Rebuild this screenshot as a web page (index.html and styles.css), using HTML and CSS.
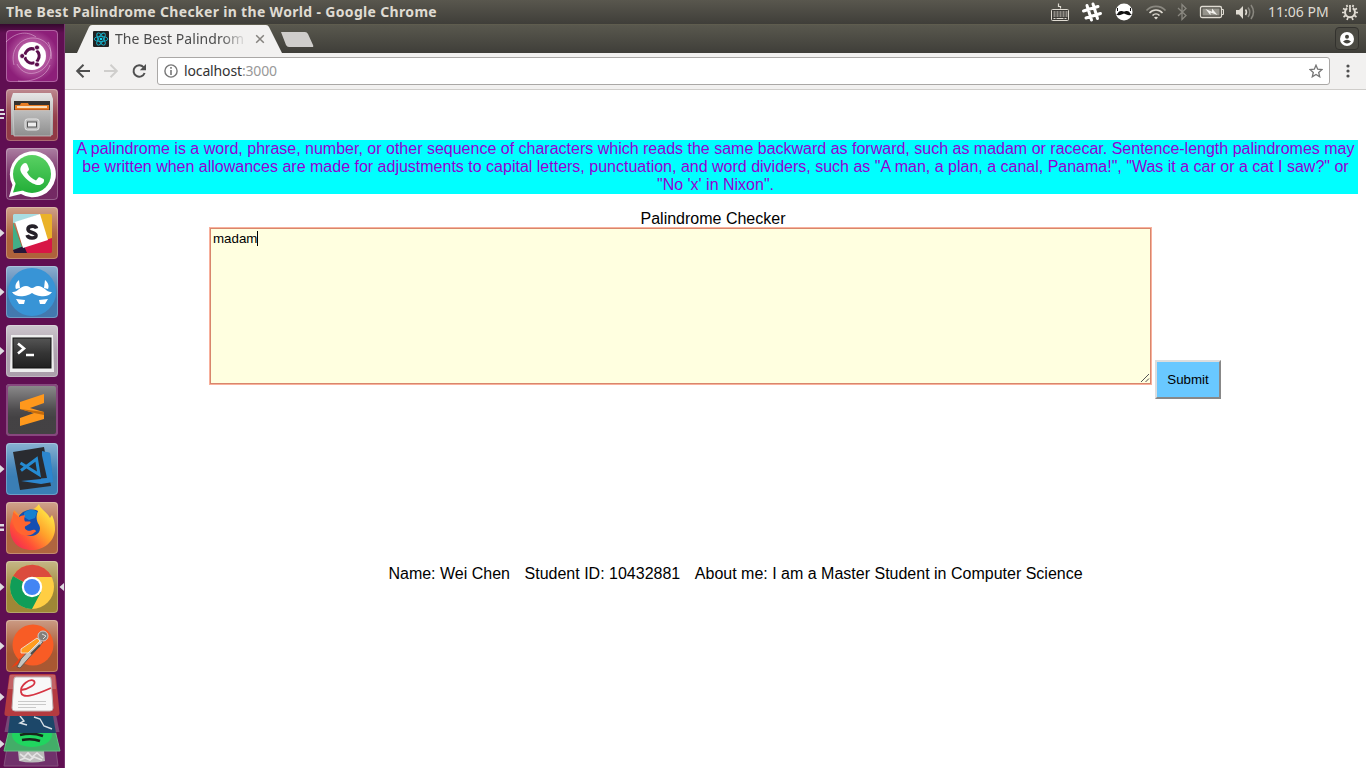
FILE: index.html
```html
<!DOCTYPE html>
<html lang="en">
<head>
<meta charset="utf-8">
<title>The Best Palindrome Checker in the World</title>
<link rel="stylesheet" href="styles.css">
</head>
<body>
<header class="panel">
  <span class="panel-title">The Best Palindrome Checker in the World - Google Chrome</span>
  <svg class="tray" width="212" height="24" viewBox="1048 0 212 24" fill="none">
    <!-- keyboard -->
    <path d="M1060.500 8.500V6.500h-2V3.500" stroke="#dfdbd2" stroke-width="1.200"/>
    <rect x="1051.500" y="9.500" width="17" height="11" rx="1" fill="#3c3b37" stroke="#dfdbd2"/>
    <path d="M1053.500 12h14M1053.500 14h14M1053.500 16h14" stroke="#dfdbd2" stroke-dasharray="2 1"/>
    <path d="M1053.500 18.500h2m1 0h7m1 0h2" stroke="#dfdbd2"/>
    <!-- hash -->
    <path d="M1087 5.500l4.500 14.500M1093 4l4.500 14.500M1083.500 11l14.500-4.500M1086 18l14.500-4.500" stroke="#fff" stroke-width="3" stroke-linecap="round"/>
    <!-- moustache -->
    <circle cx="1124" cy="12" r="8.500" fill="#fff"/>
    <path d="M1116 14.500c2 0 2-3.500 5-3.500 1.500 0 2 .5 3 .5s1.500-.5 3-.5c3 0 3 3.500 5 3.500-3 1.500-6 0-8-1-2 1-5 2.500-8 1z" fill="#111"/>
    <path d="M1117.500 8v3m13-3v3" stroke="#111"/>
    <!-- wifi -->
    <path d="M1146.500 10.500c5-5.500 14-5.500 19 0" stroke="#8a8880" stroke-width="1.600"/>
    <path d="M1149.500 13c3.500-4 9.500-4 13 0M1152.500 15.500c2-2 5-2 7 0" stroke="#dfdbd2" stroke-width="1.600"/>
    <path d="M1154 17.500q2-1.300 4 0l-2 2z" fill="#dfdbd2"/>
    <!-- bluetooth -->
    <path d="M1178 8l8 7.500-4 4V4.500l4 4-8 7.500" stroke="#8a8880" stroke-width="1.300"/>
    <!-- battery -->
    <rect x="1200.500" y="6.500" width="21" height="11" rx="1.500" stroke="#dfdbd2" stroke-width="1.300"/>
    <rect x="1202.500" y="8.500" width="17" height="7" fill="#96948c"/>
    <path d="M1222 9.500h1.500v5h-1.500" stroke="#dfdbd2"/>
    <path d="M1205.500 9l6.500 2.700V8.500l5.500 6.500-7-2.500v2.700z" fill="#f2f1ed"/>
    <!-- volume -->
    <path d="M1236 10h3l4-4v13l-4-4.500h-3z" fill="#dfdbd2"/>
    <path d="M1245.500 9.500q2 2.700 0 5.500" stroke="#dfdbd2" stroke-width="1.500"/>
    <path d="M1248 7.500q3.600 4.700 0 9.500M1251 5q5 7 0 14" stroke="#8a8880" stroke-width="1.500"/>
  </svg>
  <span class="clock">11:06 PM</span>
  <svg class="gear" width="18" height="18" viewBox="0 0 18 18" fill="none" stroke="#dfdbd2">
    <path d="M6.200 5.200a5 5 0 1 0 5.600 0" stroke-width="2"/>
    <path d="M9 2v7" stroke-width="1.800"/>
    <path d="M5.500 2l1 2M12.500 2l-1 2M2 5.500l2 1M16 5.500l-2 1M1 9.500h2.500M17 9.500h-2.500M2.500 14l2-1.500M15.500 14l-2-1.500M6 17l1-2.500M12 17l-1-2.500" stroke-width="1.700"/>
  </svg>
</header>
<div class="desktop">
  <nav class="launcher">
    <svg width="64" height="744" viewBox="0 24 64 744">
      <defs>
        <linearGradient id="gloss" x2="0" y2="1"><stop stop-color="#fff" stop-opacity=".42"/><stop offset=".5" stop-color="#fff" stop-opacity=".08"/><stop offset=".65" stop-color="#fff" stop-opacity=".03"/></linearGradient>
        <radialGradient id="dash"><stop stop-color="#d79bcb"/><stop offset=".6" stop-color="#b0529c"/><stop offset="1" stop-color="#8d1f79"/></radialGradient>
        <linearGradient id="silver" x2="0" y2="1"><stop stop-color="#e6e6e6"/><stop offset="1" stop-color="#999"/></linearGradient>
        <linearGradient id="drawer" x2="0" y2="1"><stop stop-color="#bdbdbd"/><stop offset="1" stop-color="#8e8e8e"/></linearGradient>
        <linearGradient id="green" x2="0" y2="1"><stop stop-color="#59d163"/><stop offset="1" stop-color="#23ae38"/></linearGradient>
        <linearGradient id="screen" x2="0" y2="1"><stop stop-color="#555"/><stop offset=".5" stop-color="#353535"/><stop offset="1" stop-color="#202020"/></linearGradient>
        <linearGradient id="fire" x1="1" y1="0" x2="0" y2="1"><stop offset=".1" stop-color="#fff24a"/><stop offset=".45" stop-color="#ffa12b"/><stop offset=".72" stop-color="#ff4f37"/><stop offset="1" stop-color="#ee1763"/></linearGradient>
        <g id="frame"><rect width="52" height="52" rx="3.500" fill="url(#gloss)"/><rect x=".5" y=".5" width="51" height="51" rx="3.500" fill="none" stroke="#fff" stroke-opacity=".25"/></g>
        <path id="pip" d="M0-4l4.500 4L0 4z" fill="#dedbe0"/>
      </defs>

      <!-- dash -->
      <g transform="translate(6 30)">
        <rect width="52" height="52" rx="4" fill="url(#dash)"/>
        <g fill="none" stroke="#e9c4e2" stroke-opacity=".5"><path d="M8 35C4 20 14 8 27 8c12 0 20 10 18 21M42 12c7 12 0 28-13 31-9 2-15-3-18-9M12 51c9 1 27-1 32-16M0 12C9 3 20 0 30 7"/></g>
        <circle cx="26" cy="26" r="14" fill="#fff"/>
        <circle cx="26" cy="26" r="7.200" fill="none" stroke="#5c0f4e" stroke-width="3" stroke-dasharray="13 2.080" transform="rotate(-52 26 26)"/>
        <g fill="#5c0f4e" stroke="#fff" stroke-width=".8"><circle cx="16.200" cy="26" r="2.500"/><circle cx="31" cy="17.500" r="2.500"/><circle cx="31" cy="34.500" r="2.500"/></g>
        <rect x=".5" y=".5" width="51" height="51" rx="3.500" fill="none" stroke="#fff" stroke-opacity=".3"/>
      </g>
      <!-- files -->
      <g transform="translate(6 89)">
        <rect width="52" height="52" rx="4" fill="#8e3440"/><use href="#frame"/>
        <path d="M7 4h38l2 6v36H5V10z" fill="url(#silver)"/>
        <path d="M8 12h36v12H8z" fill="#35312f"/><path d="M9 16h5l1-2h7l1 2h20v8H9z" fill="#e77d24"/><path d="M11 17h30v2H11z" fill="#f8ddbd"/><path d="M9 20h34v3H9z" fill="#c45a17"/>
        <path d="M7 21.500h38V47H8z" fill="url(#drawer)" stroke="#d0d0d0" stroke-width=".7"/>
        <rect x="19" y="30" width="14" height="11" rx="2.500" fill="#bbb" stroke="#e6e6e6"/><rect x="21.500" y="33" width="9" height="5" fill="#eee" stroke="#555"/>
      </g>
      <!-- chat -->
      <g transform="translate(6 148)">
        <rect width="52" height="52" rx="4" fill="#70235f"/><use href="#frame"/>
        <path d="M3 49l3.500-12A23 23 0 1 1 15 46z" fill="#fff"/>
        <circle cx="26" cy="26" r="19" fill="url(#green)"/><path d="M7 44.500l3-10 7 8z" fill="#26b43b"/>
        <path d="M17 16c2-2 4-1 4.500 1l1.500 4c.4 1-1.500 2.500-2 3.300 2 4 5 6.500 9 8.200l2.500-3c1-.7 5 1.500 5.500 2 .6 3-2 5-4.500 5.500-3 .5-9-2-13-6s-7-8-6-11c.4-2 1.500-3 2.500-4z" fill="#fff"/>
      </g>
      <!-- team messenger -->
      <g transform="translate(6 207)">
        <rect width="52" height="52" rx="4" fill="#ac5d35"/><use href="#frame"/>
        <path d="M8 7h26l-25 9H7V8z" fill="#a9dde2"/><path d="M33 7h12l1 1v24l-7 3z" fill="#eab229"/><path d="M7 15l9 25-9 3z" fill="#42ae87"/><path d="M19 46l-3-6 30-9v14l-1 1z" fill="#d71646"/><path d="M7 43l11-4 3 7H8z" fill="#261738"/><path d="M9 15l25-8 8 26-25 8z" fill="#fff"/>
        <path d="M30.500 21.500c-1-3.500-8.500-3-8.500.7 0 4 8.500 2.500 8 6.500-.5 3.200-8 3-8.800-.7" fill="none" stroke="#252028" stroke-width="3.600"/>
      </g>
      <!-- moustache -->
      <g transform="translate(6 266)">
        <rect width="52" height="52" rx="4" fill="#3d75ad"/><use href="#frame"/><circle cx="26" cy="26" r="24" fill="#3894d6"/>
        <path d="M6 26c5 1 8-6 14-6 3 0 4 2 6 2s3-2 6-2c6 0 9 7 14 6-4 7-16 4-20 1-4 3-16 6-20-1zM13 14c-4 3-4 7-3 9l4-1zM39 14c4 3 4 7 3 9l-4-1zM10 33l9 1-1 4h-5zM42 33l-9 1 1 4h5z" fill="#fff"/>
      </g>
      <!-- terminal -->
      <g transform="translate(6 325)">
        <rect width="52" height="52" rx="4" fill="#a99da9"/><use href="#frame"/>
        <path d="M5 10h42l1 37H4z" fill="#eee"/><rect x="7" y="13" width="38" height="30" fill="url(#screen)" stroke="#111"/>
        <path d="M12 18.500l6 5-6 5M20 30h8" fill="none" stroke="#fff" stroke-width="2.600"/>
      </g>
      <!-- sublime -->
      <g transform="translate(6 384)">
        <rect width="52" height="52" rx="4" fill="#3e3c3e"/><use href="#frame"/>
        <path d="M14 18l24-8v9l-14 5 14 4v7L14 42v-8l14-5-14-4z" fill="#ff981c"/><path d="M14 25l24 3v3l-10-2z" fill="#c56b0b"/>
        <rect x="1" y="1" width="50" height="50" rx="3" fill="none" stroke="#87477e" stroke-width="2"/>
      </g>
      <!-- code editor -->
      <g transform="translate(6 443)">
        <rect width="52" height="52" rx="4" fill="#347ab3"/><use href="#frame"/>
        <path d="M36 8l8 2 3 29-11 3-21-4 22-2z" fill="#2382cc"/><path d="M7 9l31-5 7 39-31 4z" fill="#292b30"/><path d="M36 8l8 2 3 29-12 2-20-3 20-2z" fill="#2c86ce"/><path d="M35 8l6 27-14 1z" fill="#292b30"/>
        <path d="M14.500 20L33 31.500 30.500 16 15 27.500" fill="none" stroke="#258bd2" stroke-width="3"/>
      </g>
      <!-- firefox -->
      <g transform="translate(6 502)">
        <rect width="52" height="52" rx="4" fill="#ad6039"/><use href="#frame"/>
        <path d="M33 2c1 5 8 8 11 14l2-3c2 5 3 8 3 15C48 40 38 48 26 48 12 48 4 39 4 26 4 20 6 16 8 8l5 5c3-4 8-5 12-5 3-1 6-3 8-6z" fill="url(#fire)"/>
        <path d="M13 14c4-6 13-8 19-5-2 5-2 9 1 14 3 5-1 11-8 11-8 0-12-7-12-13z" fill="#164eb1"/><path d="M18 11c4-4 10-4 13-1l-2 6-6 2-5-3z" fill="#1780d0"/>
        <path d="M7 10l6 5c2-1 4-2 6-1.500-1 3-1 4 0 6h5c2 1-1 3-5 5-1 3 3 5 6 4 2-1 5-1 5 1-2 1-4 4-8 4C14 34 8 28 7 20z" fill="#ff6530"/>
      </g>
      <!-- chrome -->
      <g transform="translate(6 561)">
        <rect width="52" height="52" rx="4" fill="#9c8330"/><use href="#frame"/>
        <circle cx="26" cy="26" r="22" fill="#ffce43"/><path d="M26 26L7 15A22 22 0 0 1 46 16H26z" fill="#db4b3d"/><path d="M26 26L7 15A22 22 0 0 0 26 48l9-17z" fill="#109d58"/><circle cx="26" cy="26" r="10.200" fill="#fff"/><circle cx="26" cy="26" r="8" fill="#4285f4"/>
      </g>
      <!-- postman -->
      <g transform="translate(6 620)">
        <rect width="52" height="52" rx="4" fill="#a6532c"/><use href="#frame"/><circle cx="27" cy="25" r="20.500" fill="#f85c25"/>
        <path d="M5 48l9-10 3 3z" fill="#ed3e13"/><path d="M33 19l4 3-15 17-8 9-3-1 4-8z" fill="#c8c5bf" stroke="#514d4a" stroke-width=".8"/><path d="M15 29l16-11 3 3-12 12-7 0z" fill="#ff9c20" stroke="#eee" stroke-width=".8"/><path d="M25 34l9-9" stroke="#4e4b48" stroke-width="2"/><circle cx="37" cy="16" r="5" fill="#827e7a" stroke="#ccc"/><path d="M36 14l4 2-3 3" fill="none" stroke="#ddd"/>
      </g>
      <!-- folded stack -->
      <path d="M9 735h45l4 31H4z" fill="#70316b" stroke="#85517f"/><path d="M18 751h26l1 10q-13 3-26 0z" fill="#bbb"/><path d="M20 754l4 3 4-4 4 4 5-4 6 5M20 760l5-2 5 2 4-3 8 3" fill="none" stroke="#e4e4e4" stroke-width="1.600"/>
      <path d="M9 730h46l5 21H4z" fill="#43ad68" stroke="#67bd83"/><ellipse cx="32" cy="735" rx="20" ry="12" fill="#20d55f"/><path d="M20 735q12-3 23 1M22 740q10-2 18 1" fill="none" stroke="#17251b" stroke-width="2.600"/>
      <path d="M8 714h48l3.500 18H4.500z" fill="#784776"/><path d="M10 716h43l3 17H8z" fill="#1c4769"/><path d="M20 716l4 5-4 2 7 2M34 717l6 2 4 7 8 3" fill="none" stroke="#d9e1e8" stroke-width="1.400"/>
      <path d="M12 674h41q3 0 3 3l3.500 36q0 3-3 3H7q-3 0-2.500-3L9 677q0-3 3-3z" fill="#b43b40"/><path d="M10 675h45l1 14H8z" fill="#fff" opacity=".2"/>
      <path d="M16 677h33q2 0 2 2l2 29q0 3-3 3H15q-3 0-3-3l2-29q0-2 2-2z" fill="#f8f8f8" stroke="#bfb5b5"/>
      <path d="M21 690c8-1 16-6 13-9-4-3-14 4-13 11 1 7 12 4 30-4" fill="none" stroke="#d63543" stroke-width="1.800"/><path d="M18 701.500h28M18 704.500h28M18 707.500h18" stroke="#c9c9c9"/>
      <g fill="#dedbe0"><rect y="109" width="4" height="2"/><rect y="113" width="5" height="2"/><rect y="117" width="4" height="2"/><rect y="524" width="4" height="2.500"/><rect y="528.500" width="4" height="2.500"/></g>
      <use href="#pip" y="233"/><use href="#pip" y="292"/><use href="#pip" y="351"/><use href="#pip" y="469"/><use href="#pip" y="587"/><use href="#pip" y="646"/><use href="#pip" y="697"/><use href="#pip" y="744"/>
      <path d="M64 583l-4.500 4 4.500 4z" fill="#dedbe0"/>
    </svg>
  </nav>
  <main class="browser">
    <div class="tabstrip">
      <svg class="tab-shape" width="250" height="29" viewBox="65 24 250 29"><path d="M77 53l12-26q1-2 3-2h174q2 0 3 2l13 26z" fill="#f2f1f0"/><path d="M281 32h24q2 0 3 2l5 11q1 2-1 2h-23q-2 0-3-2z" fill="#cfcdcb"/></svg>
      <div class="tab">
        <svg width="16" height="16" viewBox="0 0 16 16"><rect width="16" height="16" rx="1" fill="#222"/><g fill="none" stroke="#15b4ce" stroke-width=".9"><ellipse cx="8" cy="8" rx="6.800" ry="2.600"/><ellipse cx="8" cy="8" rx="6.800" ry="2.600" transform="rotate(60 8 8)"/><ellipse cx="8" cy="8" rx="6.800" ry="2.600" transform="rotate(120 8 8)"/></g><circle cx="8" cy="8" r="1.300" fill="#15d0ed"/></svg>
        <span class="tab-title">The Best Palindrom</span>
        <svg width="10" height="10" viewBox="0 0 10 10"><path d="M1.200 1.200l7.600 7.600M8.800 1.200L1.200 8.800" stroke="#85827e" stroke-width="1.500"/></svg>
      </div>
      <div class="profile"><svg width="14" height="14" viewBox="0 0 14 14"><circle cx="7" cy="7" r="7" fill="#fff"/><circle cx="7" cy="4.700" r="2" fill="#45443e"/><path d="M3 9.500q4-3.500 8 0-4 4-8 0z" fill="#45443e"/></svg></div>
    </div>
    <div class="toolbar">
      <svg class="nav-icons" width="92" height="36" viewBox="65 53 92 36" fill="none" stroke-width="2"><path d="M90 71H77.500M83.500 64.800L77.200 71l6.300 6.200" stroke="#4f4f4f"/><path d="M104 71h12.500M110.500 64.800l6.300 6.200-6.300 6.200" stroke="#cfcecc"/><path d="M143.500 67.200A5.700 5.700 0 1 0 144.600 73" stroke="#4f4f4f"/><path d="M146 64v6.200h-6.200z" fill="#4f4f4f"/></svg>
      <div class="address">
        <svg width="14" height="14" viewBox="0 0 14 14"><circle cx="7" cy="7" r="6.100" fill="none" stroke="#777" stroke-width="1.400"/><path d="M7 3v1.700M7 6v5" stroke="#777" stroke-width="1.600"/></svg>
        <span class="url">localhost<span class="port">:3000</span></span>
        <svg width="14" height="14" viewBox="0 0 14 14"><path d="M7 1.200l1.700 4 4.300.4-3.300 2.900 1 4.300L7 10.500l-3.700 2.300 1-4.300L1 5.600l4.300-.4z" fill="none" stroke="#757575" stroke-width="1.300"/></svg>
      </div>
      <svg class="more" width="4" height="14" viewBox="0 0 4 14" fill="#505050"><circle cx="2" cy="2" r="1.600"/><circle cx="2" cy="7" r="1.600"/><circle cx="2" cy="12" r="1.600"/></svg>
    </div>
    <div class="page">
      <p class="intro">A palindrome is a word, phrase, number, or other sequence of characters which reads the same backward as forward, such as madam or racecar. Sentence-length palindromes may be written when allowances are made for adjustments to capital letters, punctuation, and word dividers, such as "A man, a plan, a canal, Panama!", "Was it a car or a cat I saw?" or "No 'x' in Nixon".</p>
      <div class="label">Palindrome Checker</div>
      <div class="form">
        <div class="entry"><span>madam</span><i class="caret"></i><svg class="grip" width="10" height="10" viewBox="0 0 10 10"><path d="M1 9l8-8M5.500 9L9 5.500" stroke="#555"/></svg></div>
        <button class="submit">Submit</button>
      </div>
      <footer class="about"><span>Name: Wei Chen</span><span>Student ID: 10432881</span><span>About me: I am a Master Student in Computer Science</span></footer>
    </div>
  </main>
</div>
</body>
</html>
```
FILE: styles.css
```css
* { box-sizing: border-box; }
body { margin: 0; width: 1366px; height: 768px; overflow: hidden; background: #fff; font-family: "Liberation Sans", Arial, sans-serif; }
svg { display: block; flex: none; }
.panel { height: 24px; display: flex; align-items: center; background: linear-gradient(#59574e, #3f3e39); color: #dfdbd2; font-family: "Noto Sans", sans-serif; padding-left: 6px; }
.panel-title { width: 1042px; padding-bottom: 2px; font-size: 14px; font-weight: 700; letter-spacing: 0.33px; white-space: nowrap; }
.clock { width: 72px; padding: 0 0 1px 8px; font-size: 14px; white-space: nowrap; }
.gear { margin-left: 9px; }
.desktop { display: flex; height: 744px; }
.launcher { width: 65px; flex: none; background: linear-gradient(#35082e, #600f52 9px, #600f52); border-right: 1px solid #793570; }
.browser { flex: 1; min-width: 0; }
.tabstrip { height: 29px; position: relative; background: linear-gradient(#64614f 0, #59584e 1px, #3f3e39); display: flex; align-items: center; justify-content: space-between; padding-right: 7px; }
.tab-shape { position: absolute; left: 0; top: 0; }
.tab { position: relative; display: flex; align-items: center; padding-left: 28px; height: 29px; }
.tab-title { margin: 0 8px 0 6px; width: 132px; white-space: nowrap; font: 14px "Noto Sans", sans-serif; letter-spacing: 0.05px; color: #4c4c4c; -webkit-mask-image: linear-gradient(90deg, #000 80%, transparent); }
.profile { width: 24px; height: 23px; display: flex; align-items: center; justify-content: center; border: 1px solid #33322e; border-radius: 4px; background: #4b4a43; }
.toolbar { height: 37px; background: #f2f1f0; border-bottom: 1px solid #cfcdca; display: flex; align-items: center; }
.address { width: 1173px; height: 28px; border: 1px solid #aaa8a6; border-radius: 3px; background: #fff; display: flex; align-items: center; padding: 0 6px; }
.url { flex: 1; padding: 0 0 2px 6px; font: 14px "Noto Sans", sans-serif; letter-spacing: -0.14px; color: #333; }
.port { color: #999; }
.more { margin-left: 16px; }
.page { padding: 50px 8px 0; }
.intro { margin: 0; height: 54px; background: #0ff; color: #9400d3; font-size: 16px; line-height: 18px; text-align: center; }
.label { margin-top: 16px; padding-right: 5px; font-size: 16px; line-height: 18px; text-align: center; }
.form { display: flex; justify-content: center; align-items: flex-start; gap: 4px; }
.entry { position: relative; width: 941px; height: 156px; border: 1px solid #d8866c; outline: 1px solid #f8b09c; background: #ffffe0; display: flex; align-items: flex-start; padding: 2px; font-size: 13.333px; line-height: 16px; }
.caret { width: 1px; height: 15px; background: #000; }
.grip { position: absolute; right: 0; bottom: 0; }
.submit { width: 66px; height: 39px; margin-top: 132px; border: 2px solid; border-color: #ddd #888 #888 #ddd; background: #69c8ff; color: #000; font: 13.333px "Liberation Sans", Arial, sans-serif; padding: 0; }
.about { margin-top: 166px; padding-left: 40px; display: flex; justify-content: center; gap: 14.6px; font-size: 16px; line-height: 18px; white-space: nowrap; }
```
